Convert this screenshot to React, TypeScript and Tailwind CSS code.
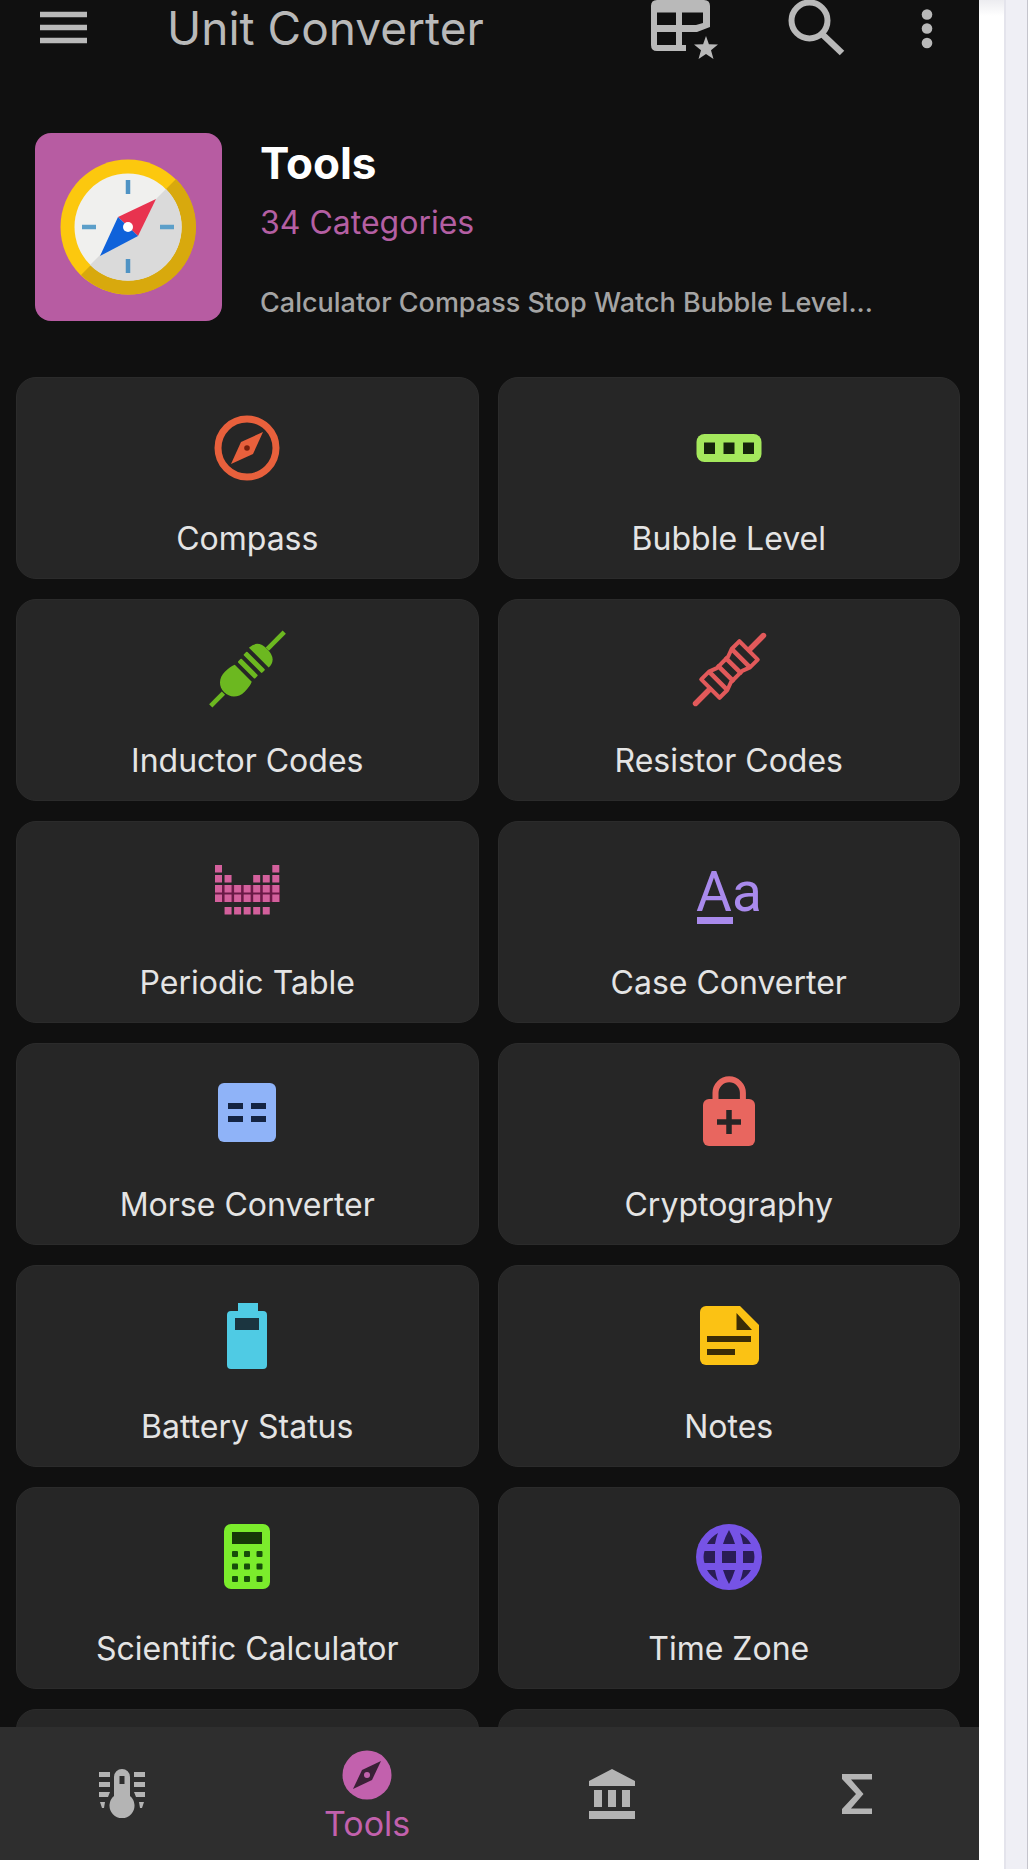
import type { ReactNode } from "react";

interface Tool {
  name: string;
  icon: ReactNode;
}

const DARK = "#262626";

// Periodic table icon: filled columns for each row
const periodicRows = [
  { y: 9, cols: [0, 6] },
  { y: 19, cols: [0, 1, 4, 5, 6] },
  { y: 29, cols: [0, 1, 2, 3, 4, 5, 6] },
  { y: 38.5, cols: [0, 1, 2, 3, 4, 5, 6] },
  { y: 51, cols: [1, 2, 3, 4, 5] },
];

function ToolIcon({ children }: { children: ReactNode }) {
  return (
    <svg viewBox="0 0 72 72" className="w-[72px] h-[72px] overflow-visible" aria-hidden="true">
      {children}
    </svg>
  );
}

const tools: Tool[] = [
  {
    name: "Compass",
    icon: (
      <ToolIcon>
        <circle cx="36" cy="36" r="29" fill="none" stroke="#e8603c" strokeWidth="7" />
        <path d="M52 20 42 42 20 52 30 30Z" fill="#e8603c" />
        <circle cx="36" cy="36" r="2.8" fill="#7a1f0c" />
      </ToolIcon>
    ),
  },
  {
    name: "Bubble Level",
    icon: (
      <ToolIcon>
        <rect x="3.5" y="22" width="65" height="28" rx="8" fill="#a4e85c" />
        <path d="M11 30.500h11v11.500H11zM30.500 30.500h11v11.500h-11zM50 30.500h11v11.500H50z" fill="#16240c" />
      </ToolIcon>
    ),
  },
  {
    name: "Inductor Codes",
    icon: (
      <ToolIcon>
        <g transform="translate(36.5 35) rotate(-45)" fill="#6cb820">
          <rect x="-52" y="-2.300" width="18" height="4.600" />
          <rect x="28" y="-2.300" width="24" height="4.600" />
          <path d="M-6-12V12Q-10 14-18 14C-27 14-33 8-33 0S-27-14-18-14Q-10-14-6-12Z" />
          <rect x="-2" y="-12" width="5" height="24" rx="1" />
          <rect x="7" y="-13" width="5" height="26" rx="1" />
          <path d="M16-14Q28-14 28 0T16 14Z" />
        </g>
      </ToolIcon>
    ),
  },
  {
    name: "Resistor Codes",
    icon: (
      <ToolIcon>
        <g transform="translate(36.5 35.500) rotate(-45)" fill="none" stroke="#e2595a" strokeLinecap="round" strokeLinejoin="round">
          <path d="M-48 0H-28M28 0H48" strokeWidth="5.500" />
          <path d="M-27-13H-16L-8-10H8L16-13H27V13H16L8 10H-8L-16 13H-27Z" strokeWidth="4" />
          <path d="M-16-12V12M-5.500-10V10M5.500-10V10M16-12V12" strokeWidth="4.500" />
        </g>
      </ToolIcon>
    ),
  },
  {
    name: "Periodic Table",
    icon: (
      <ToolIcon>
        <rect x="4" y="29" width="65" height="17" fill="#6a1a46" />
        {periodicRows.map((row) =>
          row.cols.map((col) => (
            <rect key={`${row.y}-${col}`} x={4 + col * 9.55} y={row.y} width="7" height="7.500" fill="#d3609c" />
          ))
        )}
      </ToolIcon>
    ),
  },
  {
    name: "Case Converter",
    icon: (
      <ToolIcon>
        <text x="3" y="55" fill="#a98aec" fontSize="55" fontFamily="Roboto, sans-serif">
          Aa
        </text>
        <rect x="4" y="61" width="36" height="7" fill="#a98aec" />
      </ToolIcon>
    ),
  },
  {
    name: "Morse Converter",
    icon: (
      <ToolIcon>
        <rect x="7" y="5" width="58" height="59" rx="6" fill="#8fb3f8" />
        <path d="M17 25h15v6H17zM40 25h15v6H40zM17 38h15v6H17zM40 38h15v6H40z" fill="#142443" />
      </ToolIcon>
    ),
  },
  {
    name: "Cryptography",
    icon: (
      <ToolIcon>
        <path d="M22.500 24V15a13.700 13.700 0 0 1 27.400 0V24" fill="none" stroke="#e8665f" strokeWidth="6" />
        <rect x="10" y="21" width="52" height="47" rx="6" fill="#e8665f" />
        <path d="M36 32V56M24 44H48" stroke={DARK} strokeWidth="5.500" />
      </ToolIcon>
    ),
  },
  {
    name: "Battery Status",
    icon: (
      <ToolIcon>
        <path d="M27 3H47V11H52a4 4 0 0 1 4 4V65a4 4 0 0 1-4 4H20a4 4 0 0 1-4-4V15a4 4 0 0 1 4-4H27Z" fill="#4fcbe4" />
        <rect x="24" y="18" width="24" height="12" fill="#1b3540" />
      </ToolIcon>
    ),
  },
  {
    name: "Notes",
    icon: (
      <ToolIcon>
        <path d="M13 6H47L66 25V59a6 6 0 0 1-6 6H13a6 6 0 0 1-6-6V12a6 6 0 0 1 6-6Z" fill="#fbc214" />
        <path d="M43.500 13V30H59ZM14 36H58V42H14ZM14 49H42V55H14Z" fill="#3a2c07" />
      </ToolIcon>
    ),
  },
  {
    name: "Scientific Calculator",
    icon: (
      <ToolIcon>
        <rect x="13" y="2" width="46" height="65" rx="7" fill="#7bec2c" />
        <rect x="21" y="10" width="30" height="12" fill="#163808" />
        {[32, 44.5, 57].map((y) =>
          [24, 36, 48.5].map((x) => (
            <rect key={`${x}-${y}`} x={x - 3} y={y - 3} width="6" height="6" rx="1" fill="#174d0a" />
          ))
        )}
      </ToolIcon>
    ),
  },
  {
    name: "Time Zone",
    icon: (
      <ToolIcon>
        <circle cx="36" cy="35" r="33" fill="#7653e6" />
        <g fill="#2a1d55">
          <path d="M11.500 29H22V41H11.500a20 20 0 0 1 0-12ZM29 29H43V41H29ZM50 29H60.500a20 20 0 0 1 0 12H50Z" />
          <path d="M36 8Q39.500 14 42 22H30Q32.500 14 36 8ZM25 11Q23 16 22 22H14Q18 15 25 11ZM47 11Q49 16 50 22H58Q54 15 47 11Z" />
          <path d="M36 62Q39.500 56 42 48H30Q32.500 56 36 62ZM25 59Q23 54 22 48H14Q18 55 25 59ZM47 59Q49 54 50 48H58Q54 55 47 59Z" />
        </g>
      </ToolIcon>
    ),
  },
];

function AppBar() {
  return (
    <header className="flex h-14 shrink-0 items-center pl-10 pr-10 text-[#b9b9b9]">
      <button type="button" aria-label="Menu">
        <svg viewBox="0 0 47 56" className="block w-[47px] h-14">
          <path d="M0 14.500H47M0 27.500H47M0 40.500H47" stroke="currentColor" strokeWidth="5.500" />
        </svg>
      </button>
      <h1 className="ml-20 flex-1 text-[46px] leading-[56px] whitespace-nowrap">Unit Converter</h1>
      <div className="flex items-center gap-[70px]">
        <button type="button" aria-label="Favorites">
          <svg viewBox="0 0 68 56" className="block w-[68px] h-14 overflow-visible">
            <path
              fillRule="evenodd"
              d="M7 0H54Q60 0 60 6V27L47 32H32V45H36V51H7Q1 51 1 45V6Q1 0 7 0ZM7 12.500V25H26V12.500ZM32 12.500V25H46L53 23V12.500ZM7 32V45H26V32Z"
              fill="currentColor"
            />
            <path
              d="M56 36 58.900 44.200 68 44.600 61 50.200 63.500 59 56 54 48.500 59 51 50.200 44 44.600 53.100 44.200Z"
              fill="currentColor"
            />
          </svg>
        </button>
        <button type="button" aria-label="Search">
          <svg viewBox="0 0 57 56" className="block w-[57px] h-14">
            <circle cx="21.500" cy="20.500" r="18" fill="none" stroke="currentColor" strokeWidth="6" />
            <path d="M34 34 54 53" stroke="currentColor" strokeWidth="6.500" />
          </svg>
        </button>
        <button type="button" aria-label="More options">
          <svg viewBox="0 0 24 56" className="block w-6 h-14" fill="currentColor">
            <circle cx="12" cy="14.500" r="5.300" />
            <circle cx="12" cy="28.500" r="5.300" />
            <circle cx="12" cy="43" r="5.300" />
          </svg>
        </button>
      </div>
    </header>
  );
}

function Hero() {
  return (
    <section className="flex items-start gap-[38px] pl-[35px] pr-4 pt-[77px] pb-12">
      <div className="h-[188px] w-[187px] shrink-0 rounded-2xl bg-[#b75ca2]">
        <svg viewBox="0 0 187 188" className="block w-full h-full" aria-hidden="true">
          <circle cx="93" cy="94" r="67.500" fill="#fcc80e" />
          <path d="M141 46A67.500 67.500 0 0 1 46 142Z" fill="#d8a90d" />
          <circle cx="93" cy="94" r="53.500" fill="#f0f0ee" />
          <path d="M131 56A53.500 53.500 0 0 1 55 132Z" fill="#dadada" />
          <path d="M93 47V61M93 126V140" stroke="#4f93c4" strokeWidth="4.500" />
          <path d="M47 94H61M125 94H139" stroke="#5c9fc9" strokeWidth="4.500" />
          <path d="M121 66 103 103 83 84Z" fill="#e8334f" />
          <path d="M65 123 103 103 83 84Z" fill="#0f62da" />
          <circle cx="93" cy="94" r="5" fill="#fff" />
        </svg>
      </div>
      <div className="min-w-0">
        <h2 className="mt-1 text-[44px] leading-[52px] font-bold text-white">Tools</h2>
        <p className="mt-2 text-[32px] leading-[52px] text-[#b45fa3]">34 Categories</p>
        <p className="mt-7 truncate text-[27px] leading-[52px] font-medium text-[#a4a4a4]">
          Calculator Compass Stop Watch Bubble Level...
        </p>
      </div>
    </section>
  );
}

function ToolGrid() {
  return (
    <section className="grid grid-cols-2 gap-x-[19px] gap-y-5 pl-4 pr-[19px] pb-5">
      {tools.map((tool) => (
        <button
          key={tool.name}
          type="button"
          className="flex h-[202px] flex-col items-center rounded-[20px] border border-[#2b2b2b] bg-[#262626] pt-[34px]"
        >
          {tool.icon}
          <span className="mt-[35px] text-[32px] leading-10 whitespace-nowrap text-[#e4e4e4]">{tool.name}</span>
        </button>
      ))}
      {/* next row, still under the bottom bar */}
      <div className="h-[202px] rounded-[20px] border border-[#2b2b2b] bg-[#262626]" />
      <div className="h-[202px] rounded-[20px] border border-[#2b2b2b] bg-[#262626]" />
    </section>
  );
}

function BottomNav() {
  return (
    <nav className="grid h-[133px] shrink-0 grid-cols-4 bg-[#2e2e2e] text-[#b4b4b4]">
      <button type="button" aria-label="Units" className="flex items-center justify-center">
        <svg viewBox="0 0 46 50" className="w-[46px] h-[50px]" fill="currentColor">
          <path
            fillRule="evenodd"
            d="M15 27V8a8 8 0 0 1 16 0V27A12.500 12.500 0 1 1 15 27ZM20.500 7V15H25.500V7Z"
          />
          <path d="M0 3H11V8H0ZM0 13H11V18H0ZM0 23H11L9 28H0ZM1 33H6L5 39H3ZM35 3H46V8H35ZM35 13H46V18H35ZM35 23H46V28H37ZM40 33H45L43 39H41Z" />
        </svg>
      </button>
      <button type="button" className="flex flex-col items-center pt-[23px] text-[#c261ad]">
        <svg viewBox="0 0 50 50" className="w-[50px] h-[50px]" aria-hidden="true">
          <circle cx="25" cy="25" r="24.500" fill="currentColor" />
          <path d="M39 11 30 30 11 39 20 20Z" fill="#3a2036" />
          <circle cx="25" cy="25" r="3" fill="currentColor" />
        </svg>
        <span className="mt-1 text-[34px] leading-10">Tools</span>
      </button>
      <button type="button" aria-label="Finance" className="flex items-center justify-center">
        <svg viewBox="0 0 46 50" className="w-[46px] h-[50px]" fill="currentColor">
          <path d="M23 0 46 12V17H0V12ZM5 21H13V38H5ZM19 21H27V38H19ZM33 21H41V38H33ZM0 42H46V50H0Z" />
        </svg>
      </button>
      <button type="button" aria-label="Formulas" className="flex items-center justify-center">
        <svg viewBox="0 0 30 40" className="w-[30px] h-10" fill="currentColor">
          <path d="M0 0H30V5.500H9L21.500 20 9 34.500H30V40H0V35L14 20 0 5Z" />
        </svg>
      </button>
    </nav>
  );
}

export default function App() {
  return (
    <div className="flex h-screen bg-white font-['Inter',sans-serif]">
      <div className="mb-[9px] flex min-w-0 flex-1 flex-col bg-[#101010]">
        <AppBar />
        <main className="min-h-0 flex-1 overflow-hidden">
          <Hero />
          <ToolGrid />
        </main>
        <BottomNav />
      </div>
      <div className="w-[25px] shrink-0 bg-linear-to-b from-[#ececf0] to-white to-[16px]" />
      <div className="w-6 shrink-0 border-l-2 border-r border-l-[#e4e4ec] border-r-[#c4c4cc] bg-[#efeff5]" />
    </div>
  );
}
